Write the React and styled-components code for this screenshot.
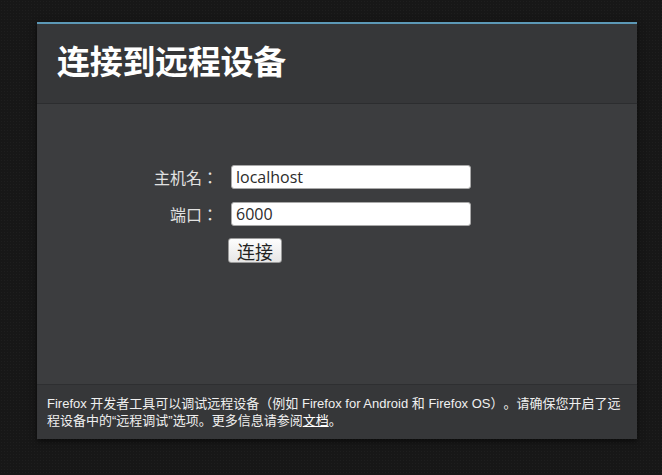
import styled, { createGlobalStyle } from "styled-components";

const GlobalStyle = createGlobalStyle`
  html, body {
    margin: 0;
    padding: 0;
    background: #161616;
    height: 100%;
  }
  body {
    font-family: "Liberation Sans", Arial, "Noto Sans CJK SC", sans-serif;
    text-spacing-trim: space-all;
  }
`;

const Page = styled.div`
  width: 662px;
  height: 475px;
  padding-top: 22px;
  padding-left: 37px;
  box-sizing: border-box;
  background-color: #171717;
  background-image: radial-gradient(rgba(255, 255, 255, 0.03) 1px, transparent 1px);
  background-size: 3px 3px;
`;

const Panel = styled.div`
  width: 600px;
  background: #3c3d3f;
  border-top: 2px solid #5c98b6;
  box-shadow: 0 2px 6px rgba(0, 0, 0, 0.6);
  display: flex;
  flex-direction: column;
`;

const Header = styled.header`
  height: 79px;
  background: #363739;
  border-bottom: 1px solid #2c2d2f;
  display: flex;
  align-items: center;
  padding: 0 20px;
`;

const Title = styled.h1`
  margin: 0;
  padding-bottom: 8px;
  color: #ffffff;
  font-family: "Noto Sans CJK SC", sans-serif;
  font-size: 33px;
  font-weight: 700;
  letter-spacing: -0.3px;
`;

const Body = styled.main`
  height: 280px;
  box-sizing: border-box;
  padding: 61px 0 0 0;
`;

const Form = styled.div`
  display: grid;
  grid-template-columns: 181px 240px;
  column-gap: 13px;
  row-gap: 13px;
  align-items: center;
`;

const Label = styled.label`
  text-align: right;
  color: #e2e2e2;
  font-family: "Noto Sans CJK TC", sans-serif;
  font-size: 16px;
`;

const Input = styled.input`
  box-sizing: border-box;
  width: 240px;
  height: 24px;
  margin: 0;
  padding: 0 4px;
  border: 1px solid #a9a9a9;
  border-radius: 3px;
  background: #fff;
  color: #2b2b2b;
  font-family: "Open Sans", sans-serif;
  font-size: 16px;
  outline: none;
`;

const Button = styled.button`
  justify-self: start;
  margin-left: -3px;
  margin-top: -1px;
  height: 25px;
  padding: 0 8px;
  border: 1px solid #9b9b9b;
  border-radius: 3px;
  background: linear-gradient(#fdfdfd, #e6e6e6);
  color: #222;
  font-family: "Noto Sans CJK SC", sans-serif;
  font-size: 18px;
  line-height: 20px;
`;

const Footer = styled.footer`
  background: #363739;
  border-top: 1px solid #2e2f31;
  padding: 10px 8px 10px 10px;
  color: #f0f0f0;
  font-size: 13px;
  line-height: 17px;
  font-family: "Liberation Sans", Arial, "Noto Sans CJK SC", sans-serif;
`;

const DocLink = styled.a`
  color: #ffffff;
  text-decoration: underline;
`;

export default function App() {
  return (
    <>
      <GlobalStyle />
      <Page>
        <Panel>
          <Header>
            <Title>连接到远程设备</Title>
          </Header>
          <Body>
            <Form>
              <Label htmlFor="host">主机名：</Label>
              <Input id="host" defaultValue="localhost" />
              <Label htmlFor="port">端口：</Label>
              <Input id="port" defaultValue="6000" />
              <span />
              <Button>连接</Button>
            </Form>
          </Body>
          <Footer>
            Firefox 开发者工具可以调试远程设备（例如 Firefox for Android 和 Firefox OS）。请确保您开启了远程设备中的“远程调试”选项。更多信息请参阅<DocLink href="#">文档</DocLink>。
          </Footer>
        </Panel>
      </Page>
    </>
  );
}
